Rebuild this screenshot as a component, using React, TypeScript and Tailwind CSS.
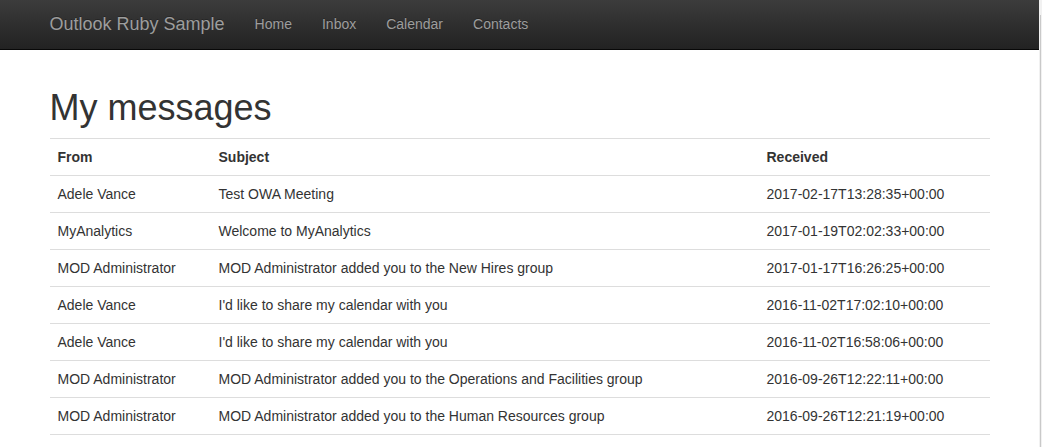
const links = ['Home', 'Inbox', 'Calendar', 'Contacts']

type Message = { from: string; subject: string; received: string }

const messages: Message[] = [
  { from: 'Adele Vance', subject: 'Test OWA Meeting', received: '2017-02-17T13:28:35+00:00' },
  { from: 'MyAnalytics', subject: 'Welcome to MyAnalytics', received: '2017-01-19T02:02:33+00:00' },
  { from: 'MOD Administrator', subject: 'MOD Administrator added you to the New Hires group', received: '2017-01-17T16:26:25+00:00' },
  { from: 'Adele Vance', subject: "I'd like to share my calendar with you", received: '2016-11-02T17:02:10+00:00' },
  { from: 'Adele Vance', subject: "I'd like to share my calendar with you", received: '2016-11-02T16:58:06+00:00' },
  { from: 'MOD Administrator', subject: 'MOD Administrator added you to the Operations and Facilities group', received: '2016-09-26T12:22:11+00:00' },
  { from: 'MOD Administrator', subject: 'MOD Administrator added you to the Human Resources group', received: '2016-09-26T12:21:19+00:00' },
]

function Navbar() {
  return (
    <nav className="h-[50px] border-b border-[#080808] bg-linear-to-b from-[#3c3c3c] to-[#222]">
      <div className="w-[970px] mx-auto px-[15px] flex items-start">
        <a className="-ml-[15px] px-[15px] pt-[14px] pb-[15px] h-[49px] text-[18px] leading-5 text-[#9d9d9d] [text-shadow:0_-1px_0_rgba(0,0,0,0.25)]">
          Outlook Ruby Sample
        </a>
        <ul className="flex">
          {links.map(l => (
            <li key={l}>
              <a className="block px-[15px] pt-[14px] pb-[15px] text-[14px] leading-5 text-[#9d9d9d] [text-shadow:0_-1px_0_rgba(0,0,0,0.25)]">
                {l}
              </a>
            </li>
          ))}
        </ul>
      </div>
    </nav>
  )
}

export default function App() {
  return (
    <div className="flex min-h-[447px] bg-white font-['Liberation_Sans',Arial,sans-serif] text-[14px] leading-5 text-[#333]">
      <div className="flex-1 min-w-0">
        <Navbar />
        <main className="w-[970px] mx-auto px-[15px] pt-[18px]">
          <h1 className="mt-5 mb-[10px] text-[36px] leading-[1.1] font-medium">My messages</h1>
          <table className="w-full table-fixed border-collapse border-b border-[#ddd]">
            <colgroup>
              <col className="w-[161px]" />
              <col className="w-[548px]" />
              <col />
            </colgroup>
            <thead>
              <tr>
                <th className="p-2 text-left align-bottom font-bold border-t border-b border-[#ddd]">From</th>
                <th className="p-2 text-left align-bottom font-bold border-t border-b border-[#ddd]">Subject</th>
                <th className="p-2 text-left align-bottom font-bold border-t border-b border-[#ddd]">Received</th>
              </tr>
            </thead>
            <tbody>
              {messages.map((m, i) => (
                <tr key={i}>
                  <td className="p-2 align-top border-t border-[#ddd] whitespace-nowrap">{m.from}</td>
                  <td className="p-2 align-top border-t border-[#ddd] whitespace-nowrap">{m.subject}</td>
                  <td className="p-2 align-top border-t border-[#ddd] whitespace-nowrap">{m.received}</td>
                </tr>
              ))}
            </tbody>
          </table>
        </main>
      </div>
      <div className="w-[3px] shrink-0 flex bg-[#f1f1f1]">
        <div className="w-px bg-[#f1f1f1]" />
        <div className="w-px mt-[15px] bg-[#c9c9c9]" />
        <div className="w-px bg-[#f1f1f1]" />
      </div>
    </div>
  )
}
